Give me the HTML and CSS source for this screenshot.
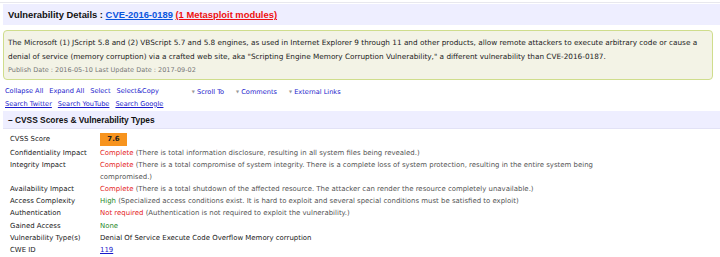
FILE: index.html
```html
<!DOCTYPE html>
<html lang="en">
<head>
    <meta charset="UTF-8">
    <title>CVE-2016-0189 Vulnerability Details</title>
    <link rel="stylesheet" href="styles.css">
</head>
<body>
    <div class="page">
        <h1 class="heading">
            Vulnerability Details :
            <a href="#" class="cve-link">CVE-2016-0189</a>
            <a href="#" class="msf-link">(1 Metasploit modules)</a>
        </h1>

        <div class="summary">
            <div class="summary-text">
                The Microsoft (1) JScript 5.8 and (2) VBScript 5.7 and 5.8 engines, as used in Internet Explorer 9 through 11 and other products, allow remote attackers to execute arbitrary code or cause a denial of service (memory corruption) via a crafted web site, aka "Scripting Engine Memory Corruption Vulnerability," a different vulnerability than CVE-2016-0187.
            </div>
            <div class="dates">Publish Date : 2016-05-10 Last Update Date : 2017-09-02</div>
        </div>

        <div class="tools">
            <div class="tool-row">
                <a href="#" class="plain">Collapse All</a>
                <a href="#" class="plain">Expand All</a>
                <a href="#" class="plain">Select</a>
                <a href="#" class="plain">Select&amp;Copy</a>
                <span class="menus">
                    <a href="#" class="plain menu"><span class="caret">&#9660;</span> Scroll To</a>
                    <a href="#" class="plain menu"><span class="caret">&#9660;</span> Comments</a>
                    <a href="#" class="plain menu"><span class="caret">&#9660;</span> External Links</a>
                </span>
            </div>
            <div class="tool-row">
                <a href="#">Search Twitter</a>
                <a href="#">Search YouTube</a>
                <a href="#">Search Google</a>
            </div>
        </div>

        <div class="section-title">&ndash; CVSS Scores &amp; Vulnerability Types</div>

        <table class="details">
            <tr>
                <th>CVSS Score</th>
                <td><span class="score">7.6</span></td>
            </tr>
            <tr>
                <th>Confidentiality Impact</th>
                <td class="note"><span class="bad">Complete</span> (There is total information disclosure, resulting in all system files being revealed.)</td>
            </tr>
            <tr>
                <th>Integrity Impact</th>
                <td class="note"><span class="bad">Complete</span> (There is a total compromise of system integrity. There is a complete loss of system protection, resulting in the entire system being<br>compromised.)</td>
            </tr>
            <tr>
                <th>Availability Impact</th>
                <td class="note"><span class="bad">Complete</span> (There is a total shutdown of the affected resource. The attacker can render the resource completely unavailable.)</td>
            </tr>
            <tr>
                <th>Access Complexity</th>
                <td class="note"><span class="good">High</span> (Specialized access conditions exist. It is hard to exploit and several special conditions must be satisfied to exploit)</td>
            </tr>
            <tr>
                <th>Authentication</th>
                <td class="note"><span class="bad">Not required</span> (Authentication is not required to exploit the vulnerability.)</td>
            </tr>
            <tr>
                <th>Gained Access</th>
                <td><span class="good">None</span></td>
            </tr>
            <tr>
                <th>Vulnerability Type(s)</th>
                <td>Denial Of Service Execute Code Overflow Memory corruption</td>
            </tr>
            <tr>
                <th>CWE ID</th>
                <td><a href="#">119</a></td>
            </tr>
        </table>
    </div>
</body>
</html>
```

FILE: styles.css
```css
* {
    box-sizing: border-box;
}

body {
    margin: 0;
    padding: 0;
    font-family: "DejaVu Sans", Verdana, sans-serif;
    font-size: 6.6px;
    color: #222;
    background: #fff;
}

a {
    color: #1a1acc;
}

.page {
    border-top: 1px solid #e8e8ee;
    margin-top: 2px;
    padding: 1px 0 0 3px;
}

.heading {
    margin: 0;
    background: #eeeeff;
    height: 21px;
    padding: 5px 5px 0;
    font-family: "Liberation Sans", Arial, sans-serif;
    font-size: 9.4px;
    font-weight: bold;
    color: #111;
}

.heading .cve-link {
    color: #0a55dd;
}

.heading .msf-link {
    color: #ee1111;
}

.summary {
    margin: 5px 7px 0 0;
    background: #f3f3e6;
    border: 1px solid #cfdd8c;
    border-radius: 4px;
    padding: 5px 5px 4px 4px;
    height: 50px;
}

.summary-text {
    font-size: 7.3px;
    line-height: 14px;
    color: #222;
}

.dates {
    font-size: 6.5px;
    color: #777;
    line-height: 12px;
}

.tools {
    margin-top: 6px;
    padding-left: 2px;
}

.tool-row {
    display: flex;
    line-height: 11.5px;
}

.tool-row a {
    margin-right: 6px;
}

.tool-row a.plain {
    text-decoration: none;
}

.menus {
    margin-left: 27px;
    display: flex;
}

.menus .menu {
    margin-right: 12px;
}

.caret {
    color: #999;
    font-size: 4px;
    vertical-align: 1px;
}

.section-title {
    margin-top: 1px;
    background: #eeeeff;
    border-bottom: 1px solid #e2e2f6;
    height: 18px;
    padding: 4px 5px 0;
    font-family: "Liberation Sans", Arial, sans-serif;
    font-size: 8.4px;
    font-weight: bold;
    color: #111;
}

.details {
    border-collapse: collapse;
    margin: 4px 0 0 7px;
    width: 590px;
    font-size: 6.95px;
}

.details th {
    text-align: left;
    font-weight: normal;
    width: 90px;
    padding: 0;
    color: #222;
    vertical-align: top;
    line-height: 12.1px;
}

.details td {
    padding: 0;
    vertical-align: top;
    line-height: 12.1px;
}

.score {
    display: inline-block;
    background: #f7941e;
    color: #222;
    font-weight: bold;
    width: 27px;
    height: 13px;
    line-height: 13px;
    text-align: center;
    margin: 0 0 1px 0;
}

.details td.note {
    color: #555;
}

.bad {
    color: #e42424;
}

.good {
    color: #2b8a2b;
}
```
